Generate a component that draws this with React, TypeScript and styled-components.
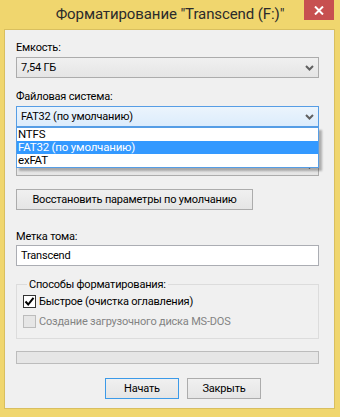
import React from "react";
import styled, { createGlobalStyle } from "styled-components";

const GlobalStyle = createGlobalStyle`
  html, body {
    margin: 0;
    padding: 0;
    background: #f0d66e;
  }
  * {
    box-sizing: border-box;
  }
`;

const FONT = `Roboto, "Noto Sans", Arial, sans-serif`;

const Window = styled.div`
  width: 340px;
  height: 417px;
  display: flex;
  flex-direction: column;
  background: #f0d66e;
  padding: 0 5px 8px 4px;
  font-family: ${FONT};
  font-size: 11px;
  letter-spacing: -0.2px;
  color: #000;
`;

const TitleBar = styled.div`
  height: 29px;
  margin: 0 -5px 0 -4px;
  display: grid;
  grid-template-columns: 36px 1fr 36px;
`;

const Title = styled.div`
  grid-column: 2;
  text-align: center;
  font-size: 15px;
  letter-spacing: -0.1px;
  line-height: 29px;
  color: #2b2b2b;
  white-space: nowrap;
`;

const CloseButton = styled.div`
  grid-column: 3;
  width: 30px;
  height: 20px;
  background: #c75050;
  display: flex;
  align-items: center;
  justify-content: center;
`;

const Client = styled.div`
  flex: 1;
  background: #f0f0f0;
  border: 1px solid #d9bf5f;
  padding: 10px 15px 0 11px;
  display: flex;
  flex-direction: column;
`;

const Label = styled.div<{ $top?: number }>`
  height: 15px;
  line-height: 15px;
  margin-top: ${(p) => p.$top ?? 0}px;
  white-space: nowrap;
`;

const ComboWrap = styled.div`
  position: relative;
  margin-top: 2px;
`;

const Combo = styled.div<{ $open?: boolean }>`
  height: 21px;
  border: 1px solid ${(p) => (p.$open ? "#569de5" : "#acacac")};
  background: ${(p) =>
    p.$open
      ? "linear-gradient(#ebf4fc, #dcecfc)"
      : "linear-gradient(#f0f0f0, #e5e5e5)"};
  display: flex;
  align-items: center;
  padding: 0 0 0 4px;
  line-height: 15px;
`;

const ComboText = styled.span`
  flex: 1;
  white-space: nowrap;
`;

const Arrow = styled.svg`
  width: 17px;
  height: 19px;
  flex: none;
`;

const DropList = styled.div`
  position: absolute;
  left: 0;
  top: 100%;
  width: 303px;
  background: #fff;
  border: 1px solid #569de5;
  box-shadow: 3px 3px 2px rgba(0, 0, 0, 0.28);
  z-index: 2;
  padding: 0;
`;

const DropItem = styled.div<{ $selected?: boolean }>`
  height: 13px;
  line-height: 13px;
  padding-left: 1px;
  font-size: 11.5px;
  background: ${(p) => (p.$selected ? "#3399ff" : "#fff")};
  color: ${(p) => (p.$selected ? "#fff" : "#000")};
  white-space: nowrap;
`;

const ButtonRow = styled.div`
  margin-top: 13px;
  display: flex;
`;

const Button = styled.div<{ $default?: boolean; $width: number }>`
  width: ${(p) => p.$width}px;
  height: 21px;
  border: 1px solid ${(p) => (p.$default ? "#3c9ae8" : "#acacac")};
  background: linear-gradient(#f0f0f0, #e5e5e5);
  display: flex;
  align-items: center;
  justify-content: center;
  white-space: nowrap;
`;

const TextBox = styled.div`
  margin-top: 1px;
  height: 21px;
  border: 1px solid #abadb3;
  background: #fff;
  padding-left: 4px;
  display: flex;
  align-items: center;
`;

const Group = styled.fieldset`
  margin: 11px 0 0 0;
  padding: 2px 0 9px 6px;
  border: 1px solid #dcdcdc;
  min-width: 0;
  display: flex;
  flex-direction: column;
  gap: 5px;
`;

const Legend = styled.legend`
  margin-left: 4px;
  padding: 0 2px;
  line-height: 15px;
`;

const CheckRow = styled.div<{ $disabled?: boolean }>`
  display: flex;
  align-items: center;
  gap: 3px;
  height: 15px;
  color: ${(p) => (p.$disabled ? "#838383" : "#000")};
  white-space: nowrap;
`;

const Box = styled.div<{ $disabled?: boolean }>`
  width: 13px;
  height: 13px;
  border: 1px solid ${(p) => (p.$disabled ? "#bcbcbc" : "#333")};
  background: ${(p) => (p.$disabled ? "#e6e6e6" : "#fff")};
  display: flex;
  align-items: center;
  justify-content: center;
`;

const Progress = styled.div`
  margin-top: 12px;
  height: 13px;
  border: 1px solid #bcbcbc;
  background: #e6e6e6;
`;

const Footer = styled.div`
  margin-top: 14px;
  display: flex;
  gap: 8px;
  padding-left: 89px;
`;

const Chevron = () => (
  <Arrow viewBox="0 0 17 19">
    <path d="M5 8 L8.5 11.5 L12 8" fill="none" stroke="#606060" strokeWidth="2" />
  </Arrow>
);

export default function App() {
  return (
    <>
      <GlobalStyle />
      <Window>
        <TitleBar>
          <Title>Форматирование "Transcend (F:)"</Title>
          <CloseButton>
            <svg width="10" height="9" viewBox="0 0 10 9">
              <path d="M1 0.5 L9 8.5 M9 0.5 L1 8.5" stroke="#fff" strokeWidth="2" />
            </svg>
          </CloseButton>
        </TitleBar>
        <Client>
          <Label>Емкость:</Label>
          <ComboWrap>
            <Combo>
              <ComboText>7,54 ГБ</ComboText>
              <Chevron />
            </Combo>
          </ComboWrap>
          <Label $top={11}>Файловая система:</Label>
          <ComboWrap>
            <Combo $open>
              <ComboText>FAT32 (по умолчанию)</ComboText>
              <Chevron />
            </Combo>
            <DropList>
              <DropItem>NTFS</DropItem>
              <DropItem $selected>FAT32 (по умолчанию)</DropItem>
              <DropItem>exFAT</DropItem>
            </DropList>
          </ComboWrap>
          {/* label and combo of the cluster size, covered by the open list */}
          <Label $top={11} />
          <ComboWrap>
            <Combo>
              <ComboText />
              <Chevron />
            </Combo>
          </ComboWrap>
          <ButtonRow>
            <Button $width={237}>Восстановить параметры по умолчанию</Button>
          </ButtonRow>
          <Label $top={19}>Метка тома:</Label>
          <TextBox>Transcend</TextBox>
          <Group>
            <Legend>Способы форматирования:</Legend>
            <CheckRow>
              <Box>
                <svg width="11" height="11" viewBox="0 0 11 11">
                  <path d="M1.5 5.5 L4.2 8.5 L9.5 1.8" fill="none" stroke="#000" strokeWidth="2" />
                </svg>
              </Box>
              Быстрое (очистка оглавления)
            </CheckRow>
            <CheckRow $disabled>
              <Box $disabled />
              Создание загрузочного диска MS-DOS
            </CheckRow>
          </Group>
          <Progress />
          <Footer>
            <Button $default $width={74}>Начать</Button>
            <Button $width={74}>Закрыть</Button>
          </Footer>
        </Client>
      </Window>
    </>
  );
}
